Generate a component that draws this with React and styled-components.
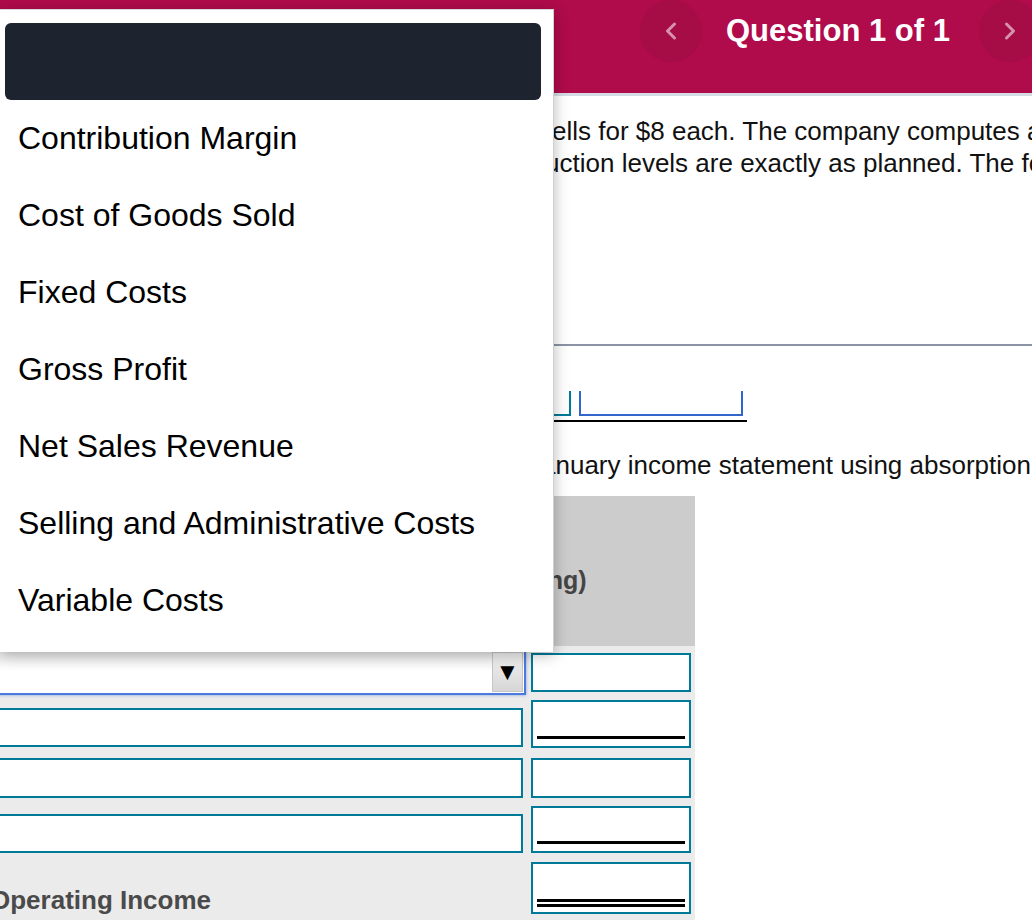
import React from 'react';
import styled, { createGlobalStyle } from 'styled-components';
import { ChevronLeft, ChevronRight } from 'lucide-react';

const GlobalStyle = createGlobalStyle`
  html, body {
    margin: 0;
    padding: 0;
    background: #fff;
  }
  body {
    font-family: "Liberation Sans", Arial, sans-serif;
    overflow: hidden;
  }
`;

const options = [
  'Contribution Margin',
  'Cost of Goods Sold',
  'Fixed Costs',
  'Gross Profit',
  'Net Sales Revenue',
  'Selling and Administrative Costs',
  'Variable Costs',
];

const App = () => {
  return (
    <Page>
      <GlobalStyle />
      <Header>
        <NavButton aria-label="Previous question">
          <ChevronLeft size={28} strokeWidth={2.6} />
        </NavButton>
        <Title>Question 1 of 1</Title>
        <NavButton aria-label="Next question">
          <ChevronRight size={28} strokeWidth={2.6} />
        </NavButton>
      </Header>

      <Main>
        <Question>
          <QLine $lead={553}>sells for $8 each. The company computes absorption</QLine>
          <QLine $lead={507}>production levels are exactly as planned. The following</QLine>
        </Question>

        <Divider />

        <AnswerRow>
          <AnswerBox $color="#007a99" $w={150} />
          <AnswerBox $color="#3366cc" $w={164} />
        </AnswerRow>

        <Prompt>
          <QLine $lead={542}>January income statement using absorption costing.</QLine>
        </Prompt>

        <Table>
          <TableHeader>Income Statement (Absorption Costing)</TableHeader>
          <TableBody>
            <Row $h={50} $pb={1}>
              <Select>
                <SelectButton>▼</SelectButton>
              </Select>
              <AmountBox $h={39} $mb={3} />
            </Row>
            <Row $h={53} $pb={1}>
              <TextField $mb={1} />
              <AmountBox $h={48} $rule="single">
                <Rule />
              </AmountBox>
            </Row>
            <Row $h={50} $pb={1}>
              <TextField $h={40} />
              <AmountBox $h={40} />
            </Row>
            <Row $h={55} $pb={1}>
              <TextField />
              <AmountBox $h={47} $rule="single">
                <Rule />
              </AmountBox>
            </Row>
            <Row $h={66} $pb={6}>
              <Label>Operating Income</Label>
              <AmountBox $h={52} $rule="double">
                <Rule $double />
              </AmountBox>
            </Row>
          </TableBody>
        </Table>
      </Main>

      <Dropdown>
        <DarkBar />
        {options.map((o) => (
          <Option key={o}>{o}</Option>
        ))}
      </Dropdown>
    </Page>
  );
};

const Page = styled.div`
  position: relative;
  width: 1032px;
  height: 920px;
  overflow: hidden;
  background: #fff;
`;

const Header = styled.header`
  height: 93px;
  background: #b00b4b;
  border-bottom: 3px solid #d6dce6;
  display: flex;
  align-items: flex-start;
  padding-left: 640px;
  overflow: hidden;
`;

const NavButton = styled.button`
  width: 62px;
  height: 62px;
  flex-shrink: 0;
  border: none;
  border-radius: 50%;
  background: #a60c46;
  color: rgba(255, 255, 255, 0.55);
  display: flex;
  align-items: center;
  justify-content: center;
  padding: 0;
`;

const Title = styled.div`
  height: 62px;
  display: flex;
  align-items: center;
  margin: 0 29px 0 24px;
  color: #fff;
  font-size: 31px;
  font-weight: 700;
  white-space: nowrap;
`;

const Main = styled.main`
  margin-left: -14px;
  width: 1100px;
`;

const Question = styled.div`
  padding-top: 19px;
  font-size: 26px;
  line-height: 32px;
  color: #111;
`;

const QLine = styled.div`
  white-space: nowrap;
  padding-left: ${(p) => p.$lead}px;
`;

const Divider = styled.div`
  margin-top: 165px;
  height: 2px;
  background: #8c93a4;
`;

const AnswerRow = styled.div`
  margin-top: 45px;
  width: 761px;
  box-sizing: border-box;
  display: flex;
  justify-content: flex-end;
  gap: 8px;
  padding: 0 4px 4px 0;
  border-bottom: 2px solid #000;
`;

const AnswerBox = styled.div`
  width: ${(p) => p.$w}px;
  height: 25px;
  box-sizing: border-box;
  border: 2px solid ${(p) => p.$color};
  border-top: none;
  background: #fff;
`;

const Prompt = styled(Question)`
  padding-top: 27px;
`;

const Table = styled.div`
  margin-top: 15px;
  width: 709px;
`;

const TableHeader = styled.div`
  height: 150px;
  box-sizing: border-box;
  padding: 18px 0 0 20px;
  background: #cccccc;
  display: flex;
  flex-direction: column;
  justify-content: center;
  align-items: center;
  font-size: 25px;
  line-height: 30px;
  font-weight: 700;
  color: #444;
  white-space: nowrap;
`;

const TableBody = styled.div`
  background: #ebebeb;
  height: 280px;
`;

const Row = styled.div`
  display: grid;
  grid-template-columns: 541px 168px;
  align-items: end;
  height: ${(p) => p.$h}px;
  box-sizing: border-box;
  padding-bottom: ${(p) => p.$pb}px;
`;

const TextField = styled.div`
  width: 533px;
  height: ${(p) => p.$h || 39}px;
  margin: 0 0 ${(p) => p.$mb || 0}px 4px;
  box-sizing: border-box;
  border: 2px solid #007a99;
  background: #fff;
`;

const Select = styled.div`
  width: 536px;
  height: 45px;
  margin-left: 4px;
  box-sizing: border-box;
  border: 2px solid #4a7bdc;
  box-shadow: 0 0 3px rgba(60, 110, 220, 0.6);
  background: linear-gradient(#e9e9e9, #fff 45%);
  display: flex;
  justify-content: flex-end;
  align-items: flex-end;
  padding: 0 1px 1px 0;
`;

const SelectButton = styled.div`
  width: 31px;
  height: 40px;
  box-sizing: border-box;
  border: 1px solid #c6c6c6;
  background: linear-gradient(#f2f2f2, #d6d6d6);
  display: flex;
  align-items: center;
  justify-content: center;
  font-size: 24px;
  line-height: 1;
  color: #000;
`;

const AmountBox = styled.div`
  width: 160px;
  height: ${(p) => p.$h}px;
  margin: 0 4px ${(p) => p.$mb || 0}px;
  box-sizing: border-box;
  border: 2px solid #007a99;
  background: #fff;
  display: flex;
  flex-direction: column;
  justify-content: flex-end;
  padding: 0 4px ${(p) => (p.$rule === 'double' ? 5 : 7)}px;
`;

const Rule = styled.div`
  box-sizing: border-box;
  height: ${(p) => (p.$double ? 8 : 3)}px;
  border-top: 3px solid #000;
  border-bottom: ${(p) => (p.$double ? '3px solid #000' : 'none')};
`;

const Label = styled.div`
  margin-left: 4px;
  font-size: 26px;
  line-height: 28px;
  font-weight: 700;
  color: #4a4a4a;
  white-space: nowrap;
`;

const Dropdown = styled.div`
  position: absolute;
  top: 9px;
  left: 0;
  z-index: 5;
  width: 554px;
  height: 643px;
  box-sizing: border-box;
  padding: 13px 12px 0 5px;
  background: #fff;
  border-top: 1px solid #d6d6d6;
  border-right: 1px solid #d0d0d0;
  box-shadow: 0 3px 14px rgba(0, 0, 0, 0.28);
`;

const DarkBar = styled.div`
  height: 77px;
  border-radius: 6px;
  background: #1e2330;
`;

const Option = styled.div`
  height: 77px;
  display: flex;
  align-items: center;
  padding-left: 13px;
  font-size: 32px;
  color: #000;
  white-space: nowrap;
`;

export default App;
